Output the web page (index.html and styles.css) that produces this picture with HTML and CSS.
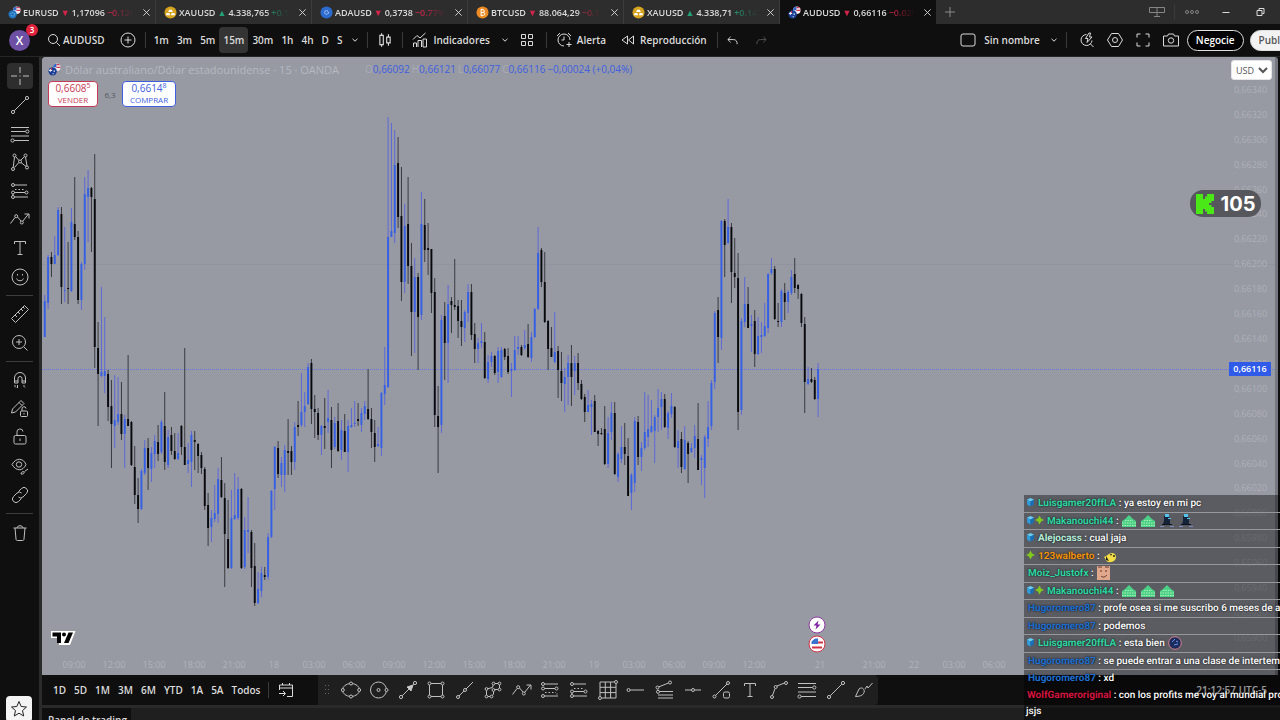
FILE: index.html
```html
<!DOCTYPE html>
<html lang="es">
<head>
    <meta charset="UTF-8">
    <meta name="viewport" content="width=device-width, initial-scale=1">
    <title>AUDUSD 0,66116</title>
    <link rel="stylesheet" href="styles.css">
</head>
<body>
    <!-- Shared icons -->
    <svg class="sprite" aria-hidden="true">
        <symbol id="i-close" viewBox="0 0 10 10"><path d="M1.5 1.5l7 7M8.5 1.5l-7 7"/></symbol>
        <symbol id="i-chevron" viewBox="0 0 8 8"><path d="M1.5 2.8L4 5.2l2.5-2.4"/></symbol>
        <symbol id="i-aud" viewBox="0 0 14 14">
            <g stroke="none"><circle cx="9.5" cy="4.5" r="4" fill="#f3eef2"/><path fill="#d23a50" d="M9 1h3l1 1.500H9zM9 4h4.500v1.500H9z"/><path fill="#2f62c9" d="M6 2l3-1.500v4H5.500z"/><circle cx="5" cy="9" r="4.5" fill="#1b3f94"/><path fill="#e9edf7" d="M2 6.500h1.200v3H2zM1 7.500h3.500v1H1zM6 8h1.500v1.500H6zM5 11h1.200v1H5z"/><path fill="#d23a50" d="M3.200 5.500h1v2h-1z"/></g>
        </symbol>
        <symbol id="i-eur" viewBox="0 0 14 14">
            <g stroke="none"><circle cx="9.5" cy="4.5" r="4" fill="#f3eef2"/><path fill="#d23a50" d="M9 1h3l1 1.500H9zM9 4h4.500v1.500H9z"/><path fill="#2f62c9" d="M6 2l3-1.500v4H5.500z"/></g><circle cx="5" cy="9" r="4.5" fill="#2173bd" stroke="none"/><circle cx="5" cy="9" r="2" stroke="#8fc5e8" stroke-dasharray="1 1"/>
        </symbol>
        <symbol id="i-gold" viewBox="0 0 14 14"><circle cx="7" cy="7" r="6.5" fill="#d6a31e" stroke="none"/><path d="M5.500 4h3l1 2.500h-5zM2.800 7.500h3L6.500 10h-4.500zM8.200 7.500h3L12 10H7.500z" fill="#fff" stroke="none"/></symbol>
        <symbol id="i-ada" viewBox="0 0 14 14"><circle cx="7" cy="7" r="6.5" fill="#2c6bcf" stroke="none"/><circle cx="7" cy="7" r="2" stroke="#dce8ff" stroke-dasharray="1.5 .6"/></symbol>
        <symbol id="i-btc" viewBox="0 0 14 14"><circle cx="7" cy="7" r="6.5" fill="#ee8a22" stroke="none"/><path d="M5.500 4v6M5 4h2.500a1.400 1.400 0 0 1 0 3H5.500h2.500a1.500 1.500 0 0 1 0 3H5M6.500 3v1M6.500 10v1" stroke="#fff"/></symbol>
        <symbol id="i-cross" viewBox="0 0 20 20"><path d="M10 1v6M10 13v6M1 10h6M13 10h6M9.500 10h1"/></symbol>
        <symbol id="i-line" viewBox="0 0 20 20"><path d="M4.200 15.800L15.800 4.200"/><circle cx="3" cy="17" r="1.6"/><circle cx="17" cy="3" r="1.6"/></symbol>
        <symbol id="i-fib" viewBox="0 0 20 20"><path d="M1 3.500h18M1 7.500h14.500M1 12h18M4 16.500h15"/><circle cx="17.3" cy="7.5" r="1.6"/><circle cx="2.5" cy="16.5" r="1.6"/></symbol>
        <symbol id="i-pattern" viewBox="0 0 20 20"><path d="M3.200 15.500L4.500 5M5.500 4.500l3.500 4M10.500 8.500L14.500 4.500M15.500 5L17 14M4.500 15.500L8.800 10.500M11 10.500l5 4"/><circle cx="4.5" cy="3.5" r="1.5"/><circle cx="15.5" cy="3.5" r="1.5"/><circle cx="10" cy="9.5" r="1.5"/><circle cx="3" cy="17" r="1.5"/><circle cx="17" cy="15.5" r="1.5"/></symbol>
        <symbol id="i-forecast" viewBox="0 0 20 20"><path d="M4.500 4H17M4.500 11.500h10.500M4.500 16H18M3 13v1.500"/><path d="M5 8.500h9" stroke-dasharray="1.5 2"/><circle cx="3" cy="4" r="1.5"/><circle cx="3" cy="11.5" r="1.5"/><circle cx="16.5" cy="11.5" r="1.5"/><circle cx="3" cy="16" r="1.5"/></symbol>
        <symbol id="i-range" viewBox="0 0 20 20"><path d="M4.500 4H18M4.500 8.500h10.500M4.500 16H18M17 13.500v1"/><path d="M5 12.500h11" stroke-dasharray="1.5 2"/><circle cx="3" cy="4" r="1.5"/><circle cx="3" cy="8.5" r="1.5"/><circle cx="16.5" cy="8.5" r="1.5"/><circle cx="3" cy="16" r="1.5"/></symbol>
        <symbol id="i-path" viewBox="0 0 20 20"><path d="M.5 14.500L5 8.500M7.500 8l3.500 4M12.500 12.500l6-7.500M14.500 5h4.500v4.500"/><circle cx="6.2" cy="7.2" r="1.5"/><circle cx="11.8" cy="13.5" r="1.5"/></symbol>
        <symbol id="i-text" viewBox="0 0 20 20"><path d="M4.500 6V3.500h11V6M10 3.500v13M7.500 16.500h5"/></symbol>
        <symbol id="i-smile" viewBox="0 0 20 20"><circle cx="10" cy="10" r="8"/><path d="M6.500 11.500c1 3 6 3 7 0M7.500 7v1.500M12.500 7v1.500"/></symbol>
        <symbol id="i-ruler" viewBox="0 0 20 20"><path d="M1.500 14.500l13-13 4 4-13 13zM5 11l2 2M8 8l2 2M11 5l2 2M13 3l1.500 1.500"/></symbol>
        <symbol id="i-zoom" viewBox="0 0 20 20"><circle cx="9" cy="9" r="6.5"/><path d="M14 14l3.500 3.500M6 9h6M9 6v6"/></symbol>
        <symbol id="i-magnet" viewBox="0 0 20 20"><path d="M4.500 13V8a5.500 5.500 0 0 1 11 0v5h-3.500V8.500a2 2 0 0 0-4 0V13zM4.500 11H8M12 11h3.500M5 15v1.500l1 1M14 15v1.500l1 1M7.500 15v3"/></symbol>
        <symbol id="i-pencil-lock" viewBox="0 0 20 20"><path d="M1.500 14l1-4L11 1.500l3 3L5.500 13zM9 3.500l3 3"/><rect x="10.5" y="12" width="7" height="5.5" rx="1"/><path d="M12 12v-2a2 2 0 0 1 4-.5M14 14v1.500"/></symbol>
        <symbol id="i-lock" viewBox="0 0 20 20"><rect x="4" y="8.5" width="12" height="8.5" rx="1.5"/><path d="M7 8.500V5.500a3 3 0 0 1 6-1M10 11.500v2.500"/></symbol>
        <symbol id="i-eye" viewBox="0 0 20 20"><path d="M2 8.500c4-7 11-7 14 0-3 7-10 7-14 0z"/><circle cx="9" cy="8.5" r="2.7"/><path d="M11 18c0-2 2-3 3-2s-1 2.500-3 2zM14.500 15.500L18 13"/></symbol>
        <symbol id="i-link" viewBox="0 0 20 20"><path d="M8.500 6.500l3-3a3.300 3.300 0 0 1 5 5l-3.500 3.500a3.200 3.200 0 0 1-4.500 0M11.500 13.500l-3 3a3.300 3.300 0 0 1-5-5L7 8a3.200 3.200 0 0 1 4.500 0"/></symbol>
        <symbol id="i-trash" viewBox="0 0 20 20"><path d="M3.500 5h13M7 5c0-3 6-3 6 0M5 5l1 11c0 1 .5 1.500 1.500 1.500h5c1 0 1.500-.5 1.500-1.500l1-11"/></symbol>
        <symbol id="i-star" viewBox="0 0 20 20"><path d="M10 2.500l2.200 5 5.300.5-4 3.600 1.200 5.400L10 14.200 5.300 17l1.200-5.400-4-3.600 5.300-.5z"/></symbol>
        <symbol id="i-ellipse" viewBox="0 0 20 20"><ellipse cx="10" cy="10" rx="8.5" ry="6.5"/><g fill="#1f1f1f"><circle cx="10" cy="3.5" r="1.5"/><circle cx="10" cy="16.5" r="1.5"/><circle cx="1.8" cy="10" r="1.5"/><circle cx="18.2" cy="10" r="1.5"/></g></symbol>
        <symbol id="i-circle" viewBox="0 0 20 20"><circle cx="9.5" cy="10" r="8"/><circle cx="9.5" cy="10" r="1.5"/><circle cx="17.5" cy="10" r="1.5" fill="#1f1f1f"/></symbol>
        <symbol id="i-arrow" viewBox="0 0 20 20"><path d="M4.200 15.800L15.800 4.200"/><path d="M15 5l-2 6-4-4z" fill="#ccc"/><circle cx="3" cy="17" r="1.6"/><circle cx="17" cy="3" r="1.6"/></symbol>
        <symbol id="i-rect" viewBox="0 0 20 20"><rect x="3.5" y="3.5" width="13" height="13"/><g fill="#1f1f1f"><circle cx="3.5" cy="3.5" r="1.5"/><circle cx="16.5" cy="3.5" r="1.5"/><circle cx="3.5" cy="16.5" r="1.5"/><circle cx="16.5" cy="16.5" r="1.5"/></g></symbol>
        <symbol id="i-ray" viewBox="0 0 20 20"><path d="M4 16l5-5M11 9l7-7"/><circle cx="3" cy="17" r="1.5"/><circle cx="10" cy="10" r="1.5"/></symbol>
        <symbol id="i-poly" viewBox="0 0 20 20"><path d="M3.500 16.500V9l6-1.500 1-4h6v6h-6V14l-2 2.500z"/><g fill="#1f1f1f"><circle cx="3.5" cy="9" r="1.4"/><circle cx="3.5" cy="16.5" r="1.4"/><circle cx="8.5" cy="16.5" r="1.4"/><circle cx="10.5" cy="10" r="1.4"/><circle cx="10.5" cy="3.5" r="1.4"/><circle cx="16.5" cy="3.5" r="1.4"/><circle cx="16.5" cy="9.5" r="1.4"/></g></symbol>
        <symbol id="i-grid" viewBox="0 0 20 20"><path d="M2 2h16v16H2zM7.300 2v16M12.600 2v16M2 7.300h16M2 12.600h16"/><g fill="#1f1f1f"><circle cx="2" cy="18" r="1.5"/><circle cx="18" cy="2" r="1.5"/></g></symbol>
        <symbol id="i-hray" viewBox="0 0 20 20"><path d="M4 10h14"/><circle cx="2.5" cy="10" r="1.5"/></symbol>
        <symbol id="i-fork" viewBox="0 0 20 20"><path d="M3.500 7l10-4M3 9.500v1M4.500 11.500H18M3 15h15M3 18h15"/><circle cx="2.5" cy="7.5" r="1.5"/><circle cx="15" cy="2.5" r="1.5"/><circle cx="3" cy="11.8" r="1.5"/></symbol>
        <symbol id="i-hline" viewBox="0 0 20 20"><path d="M2 10h6.500M11.500 10H18"/><circle cx="10" cy="10" r="1.5"/></symbol>
        <symbol id="i-info" viewBox="0 0 20 20"><path d="M3.500 15.500L15 4"/><circle cx="2.5" cy="16.5" r="1.5"/><circle cx="16" cy="3" r="1.5"/><rect x="11.5" y="12" width="6" height="6" rx="1.5"/></symbol>
        <symbol id="i-curve" viewBox="0 0 20 20"><path d="M3.500 15.500l2.500-7M8 6l7.500-3"/><circle cx="3" cy="17" r="1.5"/><circle cx="6.7" cy="7" r="1.5"/><circle cx="17" cy="3" r="1.5"/></symbol>
        <symbol id="i-brush" viewBox="0 0 20 20"><path d="M1.500 16.500L5 9c3-3 7 1 4.500 4.500-1 2-4 3-8 3zM11 9l2-3 1 2 4.500-5"/></symbol>
        <symbol id="i-cube" viewBox="0 0 10 10"><g stroke="none"><path fill="#66cdf5" d="M1 2.500L5 .5l4 2-4 2z"/><path fill="#2f9de0" d="M1 2.500l4 2V10L1.500 8z"/><path fill="#1670b8" d="M9 2.500l-4 2V10l3.500-2z"/></g></symbol>
        <symbol id="i-spark" viewBox="0 0 10 10"><path fill="#82c91e" stroke="none" d="M5 0l1.700 3.300L10 5 6.700 6.700 5 10 3.300 6.700 0 5l3.300-1.700z"/></symbol>
        <symbol id="i-house" viewBox="0 0 16 14"><path fill="#4ccf86" stroke="none" d="M1 13V7l3-2 4-4 4 4 3 2v6z"/><path stroke="#a7f3b5" stroke-dasharray="1.5 1" d="M1 9h14M1 11.500h14M4 6.500h8"/></symbol>
        <symbol id="i-robot" viewBox="0 0 16 14"><g stroke="none"><path fill="#15233a" d="M5 2h5l1 4v4H4l1-3z"/><path fill="#55c5ee" d="M6 0h4v3H6zM9 4h3v1H9z"/><path fill="#10131b" d="M3 10h10v1H3z"/><path fill="#7d8cc0" d="M1 12h4v1H1zM11 12h4v1h-4z"/></g></symbol>
    </svg>

    <div class="app">
        <header class="tabs">
            <div class="tab"><svg class="coin"><use href="#i-eur"/></svg><a href="#" class="quote"><b>EURUSD</b><i class="down">▼</i><span>1,17096</span><span class="down">−0.12%</span></a><button class="close" aria-label="Cerrar EURUSD"><svg><use href="#i-close"/></svg></button></div>
            <div class="tab"><svg class="coin"><use href="#i-gold"/></svg><a href="#" class="quote"><b>XAUUSD</b><i class="up">▲</i><span>4.338,765</span><span class="up">+0.14%</span></a><button class="close" aria-label="Cerrar XAUUSD"><svg><use href="#i-close"/></svg></button></div>
            <div class="tab"><svg class="coin"><use href="#i-ada"/></svg><a href="#" class="quote"><b>ADAUSD</b><i class="down">▼</i><span>0,3738</span><span class="down">−0.77% /</span></a><button class="close" aria-label="Cerrar ADAUSD"><svg><use href="#i-close"/></svg></button></div>
            <div class="tab"><svg class="coin"><use href="#i-btc"/></svg><a href="#" class="quote"><b>BTCUSD</b><i class="down">▼</i><span>88.064,29</span><span class="down">−0.17%</span></a><button class="close" aria-label="Cerrar BTCUSD"><svg><use href="#i-close"/></svg></button></div>
            <div class="tab"><svg class="coin"><use href="#i-gold"/></svg><a href="#" class="quote"><b>XAUUSD</b><i class="up">▲</i><span>4.338,71</span><span class="up">+0.14%</span></a><button class="close" aria-label="Cerrar XAUUSD"><svg><use href="#i-close"/></svg></button></div>
            <div class="tab active"><svg class="coin"><use href="#i-aud"/></svg><a href="#" class="quote"><b>AUDUSD</b><i class="down">▼</i><span>0,66116</span><span class="down">−0.02%</span></a><button class="close" aria-label="Cerrar AUDUSD"><svg><use href="#i-close"/></svg></button></div>
            <button class="new-tab" aria-label="Nueva pestaña"><svg viewBox="0 0 12 12"><path d="M6 1v10M1 6h10"/></svg></button>
            <div class="window-buttons">
                <button class="dim" aria-label="Disposición"><svg viewBox="0 0 18 14"><path d="M1.500 2.500h15v5h-15zM9 2.500v9M6 11.500h6"/></svg></button>
                <span class="sep"></span>
                <button class="dim" aria-label="Más"><svg viewBox="0 0 18 14"><circle cx="4" cy="7" r="1.5"/><circle cx="9" cy="7" r="1.5"/><circle cx="14" cy="7" r="1.5"/></svg></button>
                <button aria-label="Minimizar"><svg viewBox="0 0 18 14"><path d="M5.500 7.500h7"/></svg></button>
                <button aria-label="Restaurar"><svg viewBox="0 0 18 14"><path d="M6 5.500h5v5H6zM8 5V3.500h5v5h-1.500"/></svg></button>
            </div>
        </header>

        <div class="toolbar">
            <button class="avatar" aria-label="Perfil">X<span class="badge">3</span></button>
            <button class="symbol"><svg viewBox="0 0 14 14"><circle cx="6" cy="6" r="4.5"/><path d="M9.500 9.500L13 13"/></svg>AUDUSD</button>
            <button class="add" aria-label="Comparar"><svg viewBox="0 0 16 16"><circle cx="8" cy="8" r="7"/><path d="M8 4.500v7M4.500 8h7"/></svg></button>
            <span class="sep"></span>
            <div class="intervals">
                <button>1m</button><button>3m</button><button>5m</button><button class="on">15m</button><button>30m</button><button>1h</button><button>4h</button><button>D</button><button>S</button>
            </div>
            <button class="chev" aria-label="Más intervalos"><svg><use href="#i-chevron"/></svg></button>
            <span class="sep"></span>
            <button class="candle-type" aria-label="Velas"><svg viewBox="0 0 14 14"><path d="M4 1v2M4 11v2M2.500 3h3v8h-3zM10 2v2.500M10 9.500V12M8.500 4.500h3v5h-3z"/></svg></button>
            <span class="sep"></span>
            <button class="indicators"><svg viewBox="0 0 16 16"><path d="M1.500 15v-4h3v4M6 15V8.500h3.500V15M11 15V7h3.500v8zM1 7.500l4-4 3 2.500 5.500-5"/></svg>Indicadores</button>
            <button class="chev" aria-label="Indicadores favoritos"><svg><use href="#i-chevron"/></svg></button>
            <button class="layouts" aria-label="Plantillas"><svg viewBox="0 0 14 14"><path d="M1.500 1.500h4v4h-4zM8.500 1.500h4v4h-4zM1.500 8.500h4v4h-4zM8.500 8.500h4v4h-4z"/></svg></button>
            <span class="sep"></span>
            <button class="alert"><svg viewBox="0 0 16 16"><path d="M14 8a6 6 0 1 0-6 6M8 4.500V8H5.500M1 4l3-3M15 4l-3-3M13 10v5M10.500 12.500h5"/></svg>Alerta</button>
            <button class="replay"><svg viewBox="0 0 14 14"><path d="M6.500 3v8L1 7zM12.500 3v8L7.500 7z"/></svg>Reproducción</button>
            <span class="sep"></span>
            <button class="undo" aria-label="Deshacer"><svg viewBox="0 0 14 14"><path d="M5 3L2 6l3 3M2 6h6c3 0 4 2 4 5"/></svg></button>
            <button class="redo" aria-label="Rehacer"><svg viewBox="0 0 14 14"><path d="M9 3l3 3-3 3M12 6H6c-3 0-4 2-4 5"/></svg></button>

            <div class="toolbar-right">
                <button aria-label="Diseño"><svg viewBox="0 0 16 16"><rect x="1" y="2" width="14" height="12" rx="2"/></svg></button>
                <button class="layout-name">Sin nombre <svg class="small"><use href="#i-chevron"/></svg></button>
                <span class="sep"></span>
                <button aria-label="Búsqueda rápida"><svg viewBox="0 0 16 16"><path d="M7.500 2.500a5.500 5.500 0 1 0 5.500 6M11.500 12l3 3M10 1L6.500 6.500H9l-1 4L13 5h-2.500l1-4z"/></svg></button>
                <button aria-label="Ajustes"><svg viewBox="0 0 16 16"><path d="M4.500 1.500h7L15.500 8l-4 6.500h-7L.5 8z"/><circle cx="8" cy="8" r="2.5"/></svg></button>
                <button aria-label="Pantalla completa"><svg viewBox="0 0 16 16"><path d="M2 5.500V2h3.500M10.500 2H14v3.500M14 10.500V14h-3.500M5.500 14H2v-3.500"/></svg></button>
                <button aria-label="Captura"><svg viewBox="0 0 16 16"><path d="M.5 4h4l1-2h5l1 2h4v10H.5z"/><circle cx="8" cy="8.5" r="2.7"/></svg></button>
                <button class="trade">Negocie</button>
                <button class="publish">Publicar</button>
            </div>
        </div>

        <div class="workspace">
            <nav class="sidebar">
                <div class="tools eight">
                    <button class="on" aria-label="Cruz"><svg><use href="#i-cross"/></svg></button>
                    <button aria-label="Línea de tendencia"><svg><use href="#i-line"/></svg></button>
                    <button aria-label="Fibonacci"><svg><use href="#i-fib"/></svg></button>
                    <button aria-label="Patrones"><svg><use href="#i-pattern"/></svg></button>
                    <button aria-label="Previsión"><svg><use href="#i-forecast"/></svg></button>
                    <button aria-label="Ruta"><svg><use href="#i-path"/></svg></button>
                    <button aria-label="Texto"><svg><use href="#i-text"/></svg></button>
                    <button aria-label="Iconos"><svg><use href="#i-smile"/></svg></button>
                </div>
                <hr>
                <div class="tools two">
                    <button aria-label="Medir"><svg><use href="#i-ruler"/></svg></button>
                    <button aria-label="Acercar"><svg><use href="#i-zoom"/></svg></button>
                </div>
                <hr>
                <div class="tools five">
                    <button aria-label="Imán"><svg><use href="#i-magnet"/></svg></button>
                    <button aria-label="Modo dibujo"><svg><use href="#i-pencil-lock"/></svg></button>
                    <button aria-label="Bloquear"><svg><use href="#i-lock"/></svg></button>
                    <button aria-label="Ocultar"><svg><use href="#i-eye"/></svg></button>
                    <button aria-label="Enlazar"><svg><use href="#i-link"/></svg></button>
                </div>
                <hr>
                <div class="tools one">
                    <button aria-label="Eliminar"><svg><use href="#i-trash"/></svg></button>
                </div>
                <button class="favorite" aria-label="Favoritos"><svg><use href="#i-star"/></svg></button>
            </nav>

            <main class="main">
                <section class="chart">
                    <div class="pane">
                        <svg class="plot" id="plot" role="img" aria-label="Gráfico de velas AUDUSD"></svg>
                        <div class="legend">
                            <div class="title">
                                <svg class="coin"><use href="#i-aud"/></svg>
                                <span class="name">Dólar australiano/Dólar estadounidense · 15 · OANDA</span>
                                <span class="ohlc"><span><i>O</i>0,66092</span><span><i>H</i>0,66121</span><span><i>L</i>0,66077</span><span><i>C</i>0,66116</span><span>−0,00024 (+0,04%)</span></span>
                            </div>
                            <div class="deal">
                                <button class="sell">0,6608<sup>5</sup><small>VENDER</small></button>
                                <span class="spread">6,3</span>
                                <button class="buy">0,6614<sup>8</sup><small>COMPRAR</small></button>
                            </div>
                        </div>
                        <svg class="brand" viewBox="0 0 26 16" aria-hidden="true"><path d="M1 1h24.500L20 15H9V8H1z" fill="#fff"/><path d="M2.500 2.500h8.500v10.500H7V6.500H2.500z"/><circle cx="14" cy="4.5" r="2"/><path d="M18.500 2.500h4.500L18.500 13H14z"/></svg>
                        <div class="events">
                            <svg viewBox="0 0 18 18"><circle cx="9" cy="9" r="8" fill="#fff" stroke="#8e3aa0"/><path d="M10.500 4.500L5.500 9.500h3l-1 4 5-5h-3z" fill="#7b1fa2" stroke="none"/></svg>
                            <svg viewBox="0 0 18 18"><circle cx="9" cy="9" r="8" fill="#fff" stroke="#cf3347"/><path d="M3.500 6.500L7 3.500h3V9H3.500z" fill="#3b73d1" stroke="none"/><path d="M10 7.500h5M4 12.500h10" stroke="#cf3347" stroke-width="2"/></svg>
                        </div>
                        <div class="price-axis" id="prices"></div>
                        <select class="currency" aria-label="Moneda"><option>USD</option></select>
                        <span class="last-price">0,66116</span>
                    </div>
                    <div class="time-axis">
                        <span>09:00</span><span>12:00</span><span>15:00</span><span>18:00</span><span>21:00</span><span>18</span><span>03:00</span><span>06:00</span><span>09:00</span><span>12:00</span><span>15:00</span><span>18:00</span><span>21:00</span><span>19</span><span>03:00</span><span>06:00</span><span>09:00</span><span>12:00</span><span class="week">21</span><span>21:00</span><span>22</span><span>03:00</span><span>06:00</span>
                    </div>
                </section>

                <div class="bottom-bar">
                    <div class="ranges">
                        <button>1D</button><button>5D</button><button>1M</button><button>3M</button><button>6M</button><button>YTD</button><button>1A</button><button>5A</button><button>Todos</button>
                    </div>
                    <span class="sep"></span>
                    <button class="goto" aria-label="Ir a fecha"><svg viewBox="0 0 16 16"><path d="M1.500 8V3h13v11.500H9M1.500 6h13M4.500 1v2M11.500 1v2M1 11.500h6M5 9l2.500 2.500L5 14"/></svg></button>
                    <div class="favorites">
                        <svg class="grip" viewBox="0 0 6 12"><path d="M1.500 1v11M4.500 1v11" stroke-dasharray="1 3"/></svg>
                        <button aria-label="Elipse"><svg><use href="#i-ellipse"/></svg></button>
                        <button aria-label="Círculo"><svg><use href="#i-circle"/></svg></button>
                        <button aria-label="Flecha"><svg><use href="#i-arrow"/></svg></button>
                        <button aria-label="Rectángulo"><svg><use href="#i-rect"/></svg></button>
                        <button aria-label="Rayo"><svg><use href="#i-ray"/></svg></button>
                        <button aria-label="Polilínea"><svg><use href="#i-poly"/></svg></button>
                        <button aria-label="Ruta"><svg><use href="#i-path"/></svg></button>
                        <button aria-label="Posición larga"><svg><use href="#i-range"/></svg></button>
                        <button aria-label="Posición corta"><svg><use href="#i-forecast"/></svg></button>
                        <button aria-label="Cuadrícula"><svg><use href="#i-grid"/></svg></button>
                        <button aria-label="Rayo horizontal"><svg><use href="#i-hray"/></svg></button>
                        <button aria-label="Extensión"><svg><use href="#i-fork"/></svg></button>
                        <button aria-label="Línea horizontal"><svg><use href="#i-hline"/></svg></button>
                        <button aria-label="Línea informativa"><svg><use href="#i-info"/></svg></button>
                        <button aria-label="Texto"><svg><use href="#i-text"/></svg></button>
                        <button aria-label="Curva"><svg><use href="#i-curve"/></svg></button>
                        <button aria-label="Fibonacci"><svg><use href="#i-fib"/></svg></button>
                        <button aria-label="Tendencia"><svg><use href="#i-line"/></svg></button>
                        <button aria-label="Pincel"><svg><use href="#i-brush"/></svg></button>
                    </div>
                    <button class="clock">21:12:57 UTC-5</button>
                </div>

                <footer class="panel"><button>Panel de trading</button></footer>
            </main>
        </div>

        <!-- Stream overlays -->
        <div class="viewers"><svg viewBox="0 0 18 20"><path d="M0 0h7v5h2V2.500h2V0h7v7h-2.500v2H13v2h2.500v2H18v7h-7v-2.500H9V15H7v5H0z" fill="#4be817"/></svg>105</div>

        <ul class="chat">
            <li><svg><use href="#i-cube"/></svg><b class="mint">Luisgamer20ffLA</b> : ya estoy en mi pc</li>
            <li><svg><use href="#i-cube"/></svg><svg><use href="#i-spark"/></svg><b class="mint">Makanouchi44</b> : <svg class="emote"><use href="#i-house"/></svg><svg class="emote"><use href="#i-house"/></svg><svg class="emote"><use href="#i-robot"/></svg><svg class="emote"><use href="#i-robot"/></svg></li>
            <li><svg><use href="#i-cube"/></svg><b class="pale">Alejocass</b> : cual jaja</li>
            <li><svg><use href="#i-spark"/></svg><b class="orange">123walberto</b> : <svg class="emote" viewBox="0 0 16 14"><path d="M2 8c3-1 5-4 8-4 4 0 5 4 3 7-3 3-8 3-9 0z" fill="#f3df45" stroke="none"/><path d="M4 7l3 5-3-1zM8 5h2l-1 2z" fill="#222" stroke="none"/><circle cx="12" cy="7" r="1" fill="#222" stroke="none"/></svg></li>
            <li><b class="mint">Moiz_Justofx</b> : <svg class="emote" viewBox="0 0 16 14"><path d="M1 0h13v14H1z" fill="#dfa78b" stroke="none"/><path d="M2 1h4M9 1h4M4 5h2M9 5h2M5 10c2 2 4 1 6-1" stroke="#63342b"/></svg></li>
            <li><svg><use href="#i-cube"/></svg><svg><use href="#i-spark"/></svg><b class="mint">Makanouchi44</b> : <svg class="emote"><use href="#i-house"/></svg><svg class="emote"><use href="#i-house"/></svg><svg class="emote"><use href="#i-house"/></svg></li>
            <li><b class="blue">Hugoromero87</b> : profe osea si me suscribo 6 meses de academia</li>
            <li><b class="blue">Hugoromero87</b> : podemos</li>
            <li><svg><use href="#i-cube"/></svg><b class="mint">Luisgamer20ffLA</b> : esta bien <svg class="emote" viewBox="0 0 16 14"><circle cx="8" cy="7" r="6.3" fill="#1c2a5c" stroke="#d9848f"/><path d="M5 6l3-3M7 9l4-1M9 5l2 1" stroke="#6f93e8"/></svg></li>
            <li><b class="blue">Hugoromero87</b> : se puede entrar a una clase de intertemporal</li>
            <li class="plain"><b class="blue">Hugoromero87</b> : xd</li>
            <li class="plain last"><b class="red">WolfGameroriginal</b> : con los profits me voy al mundial profe<br>jsjs</li>
        </ul>
    </div>

    <script src="chart.js"></script>
</body>
</html>
```
FILE: styles.css
```css
* {
    margin: 0;
    padding: 0;
    box-sizing: border-box;
}

body {
    background: #0f0f0f;
    color: #dbdbdb;
    font-family: "Open Sans", "Noto Sans", sans-serif;
    font-size: 10px;
    font-weight: 600;
    overflow: hidden;
}
button {
    background: none;
    border: 0;
    color: inherit;
    font: inherit;
    display: flex;
    align-items: center;
    justify-content: center;
    white-space: nowrap;
}
a {
    color: inherit;
    text-decoration: none;
}
i {
    font-style: normal;
}
svg {
    fill: none;
    stroke: currentColor;
    flex: none;
}
.sprite {
    position: absolute;
    width: 0;
    height: 0;
}
.app {
    position: relative;
    height: 100vh;
    display: flex;
    flex-direction: column;
    overflow: hidden;
}
.sep {
    width: 1px;
    height: 16px;
    background: #3a3a3a;
    flex: none;
}
.up { color: #22a078; }
.down { color: #d3254b; }

/* Symbol tabs */
.tabs {
    height: 24px;
    flex: none;
    display: flex;
    background: #2d2d2d;
    font-size: 9px;
}
.tab {
    flex: 0 1 156px;
    min-width: 0;
    display: flex;
    align-items: center;
    padding: 0 3px 0 8px;
    border-right: 1px solid #3c3c3c;
}
.tab.active {
    background: #0f0f0f;
    border: 0;
}
.coin {
    width: 13px;
    height: 13px;
    margin-right: 2px;
}
.quote {
    flex: 1;
    min-width: 0;
    display: flex;
    gap: 2px;
    overflow: hidden;
    white-space: nowrap;
    -webkit-mask-image: linear-gradient(to right, #000 75%, transparent 98%);
    mask-image: linear-gradient(to right, #000 75%, transparent 98%);
}
.quote i {
    width: 9px;
    font-size: 9px;
    text-align: center;
}
.quote b {
    font-weight: 600;
}
.close {
    width: 12px;
    height: 24px;
    margin-left: 4px;
}
.close svg {
    width: 9px;
    height: 9px;
}
.new-tab {
    width: 28px;
    color: #8a8a8a;
}
.new-tab svg {
    width: 12px;
    height: 12px;
}
.window-buttons {
    margin-left: auto;
    display: flex;
    align-items: center;
    padding-right: 3px;
}
.window-buttons button {
    width: 34px;
    height: 24px;
}
.window-buttons svg {
    width: 18px;
    height: 14px;
}
.dim {
    color: #858585;
}

/* Main toolbar */
.toolbar {
    height: 33px;
    flex: none;
    display: flex;
    align-items: center;
    border-bottom: 1px solid #262626;
    padding-left: 9px;
}
.toolbar svg {
    width: 16px;
    height: 16px;
}
.avatar {
    position: relative;
    width: 21px;
    height: 21px;
    border-radius: 50%;
    background: #6d4fa3;
    color: #fff;
    font-size: 12px;
}
.badge {
    position: absolute;
    top: -6px;
    right: -8px;
    width: 12px;
    height: 12px;
    border-radius: 50%;
    background: #e0223c;
    font-size: 8px;
    line-height: 12px;
}
.symbol {
    margin-left: 17px;
    gap: 2px;
}
.toolbar .symbol svg {
    width: 14px;
    height: 14px;
}
.add {
    margin: 0 9px 0 15px;
}
.intervals {
    display: flex;
    margin-left: 4px;
}
.intervals button {
    height: 26px;
    padding: 0 4px;
    border-radius: 4px;
}
.intervals .on {
    background: #343434;
}
.chev {
    width: 18px;
}
.toolbar .chev svg, .toolbar .small {
    width: 8px;
    height: 8px;
}
.chev + .sep {
    margin-left: 3px;
}
.candle-type {
    width: 34px;
}
.indicators {
    gap: 5px;
    margin: 0 6px 0 9px;
}
.layouts {
    width: 26px;
    margin-right: 6px;
}
.toolbar .layouts svg {
    width: 14px;
    height: 14px;
}
.alert {
    margin: 0 15px 0 9px;
    gap: 5px;
}
.replay {
    margin-right: 10px;
    gap: 5px;
}
.toolbar .replay svg {
    width: 14px;
    height: 14px;
}
.undo, .redo {
    width: 29px;
}
.redo {
    color: #555;
}
.toolbar .undo svg, .toolbar .redo svg {
    width: 13px;
    height: 13px;
}
.toolbar-right {
    margin-left: auto;
    margin-right: -27px;
    display: flex;
    align-items: center;
    gap: 12px;
}
.layout-name {
    gap: 10px;
    margin: 0 -4px;
}
.toolbar .trade, .toolbar .publish {
    height: 21px;
    border-radius: 11px;
    border: 1px solid #e0e0e0;
    color: #fff;
    padding: 0 8px;
    margin: 0 -6px 0 -4px;
    background: #000;
}
.toolbar .publish {
    background: #f2f2f2;
    color: #555;
    margin: 0;
}

/* Drawing tools */
.workspace {
    flex: 1;
    min-height: 0;
    display: flex;
}
.sidebar {
    width: 42px;
    flex: none;
    display: flex;
    flex-direction: column;
    padding: 5px 0 0;
    border-right: 3px solid #2a2b2b;
}
.sidebar svg, .favorites svg {
    width: 20px;
    height: 20px;
}
.tools {
    display: grid;
    grid-auto-rows: 1fr;
    justify-items: center;
    align-items: center;
    color: #c0c0c0;
}
.eight { height: 229px; }
.two { height: 57px; }
.five { height: 143px; }
.one { height: 29px; }
.tools button {
    width: 26px;
    height: 26px;
    border-radius: 4px;
}
.tools .on {
    background: #2e2e2e;
}
.sidebar hr {
    width: 27px;
    border: 0;
    border-top: 1px solid #3c3c3c;
    margin: 4px auto 4px 6px;
}
.favorite {
    width: 26px;
    height: 26px;
    margin: auto 0 -2px 6px;
    border-radius: 4px;
    background: #f4f4f4;
    color: #222;
}

/* Chart */
.main {
    flex: 1;
    min-width: 0;
    display: flex;
    flex-direction: column;
}
.chart {
    flex: 1;
    min-height: 0;
    display: flex;
    flex-direction: column;
    margin-right: 2px;
    background: #979aa3;
    border-right: 3px solid #777980;
    border-radius: 3px 3px 0 0;
    font-weight: 400;
}
.pane {
    position: relative;
    flex: 1;
    min-height: 0;
    display: flex;
    justify-content: space-between;
}
.plot {
    position: absolute;
    width: 100%;
    height: 100%;
    stroke: none;
}
.legend {
    position: relative;
    padding: 4px 0 0 6px;
}
.title {
    display: flex;
    align-items: center;
    height: 16px;
    font-size: 11px;
    color: #b5b8c1;
    white-space: nowrap;
}
.title .coin {
    margin-right: 4px;
}
.ohlc {
    display: flex;
    gap: 2px;
    margin-left: 26px;
    font-size: 10px;
    color: #3f5ee0;
}
.ohlc i {
    color: #a9acb6;
}
.deal {
    display: flex;
    align-items: center;
    margin-top: 4px;
}
.sell, .buy {
    display: block;
    width: 50px;
    height: 26px;
    border: 1px solid #c73a55;
    border-radius: 4px;
    background: #fff;
    color: #c73a55;
    font-size: 10px;
    line-height: 11px;
}
.buy {
    width: 54px;
    border-color: #3f5ee0;
    color: #3f5ee0;
}
.deal sup {
    font-size: 7px;
    line-height: 1px;
}
.deal small {
    display: block;
    font-size: 8px;
    line-height: 11px;
}
.spread {
    width: 24px;
    text-align: center;
    font-size: 8px;
    color: #55575e;
}
.brand {
    position: absolute;
    left: 8px;
    bottom: 9px;
    width: 26px;
    height: 16px;
    fill: #000;
    stroke: none;
}
.events {
    position: absolute;
    left: 766px;
    bottom: 2px;
    width: 18px;
    display: grid;
    gap: 1px;
}
.price-axis {
    position: relative;
    width: 41px;
    margin-right: 4px;
    padding: 20px 0 5px;
    display: flex;
    flex-direction: column;
    font-size: 9px;
    color: #adb0b8;
}
.price-axis span {
    flex: 1;
    display: flex;
    align-items: center;
    justify-content: center;
}
.currency {
    position: absolute;
    top: 3px;
    right: 3px;
    width: 41px;
    height: 20px;
    border: 1px solid #e4e4e8;
    border-radius: 3px;
    background: #fff;
    color: #555;
    font: 9px "Open Sans", sans-serif;
}
.last-price {
    position: absolute;
    right: 4px;
    top: 305px;
    width: 42px;
    height: 14px;
    background: #2f5be8;
    color: #fff;
    font-size: 9px;
    font-weight: 600;
    line-height: 14px;
    text-align: center;
}
.time-axis {
    height: 20px;
    flex: none;
    display: flex;
    padding-left: 12px;
    overflow: hidden;
    font-size: 9px;
    line-height: 19px;
    color: #b0b3bb;
}
.time-axis span {
    flex: 0 0 40px;
    text-align: center;
}
.time-axis .week {
    margin: 0 14px 0 26px;
}

/* Ranges and favourite drawings */
.bottom-bar {
    height: 30px;
    flex: none;
    display: flex;
    align-items: center;
    padding-left: 7px;
}
.ranges {
    display: flex;
}
.ranges button {
    padding: 0 4px;
}
.bottom-bar .sep {
    margin: 0 9px 0 4px;
}
.goto svg {
    width: 16px;
    height: 16px;
}
.favorites {
    width: 560px;
    height: 30px;
    margin-left: 24px;
    display: flex;
    align-items: center;
    background: #1f1f1f;
    border-radius: 0 4px 4px 0;
    color: #c0c0c0;
}
.favorites .grip {
    width: 6px;
    height: 12px;
    margin: 0 6px;
    color: #666;
}
.favorites button {
    flex: 1;
}
.clock {
    margin-left: auto;
    padding-right: 13px;
    color: #fff;
}
.panel {
    height: 15px;
    flex: none;
    overflow: hidden;
    background: #1f1f1f;
    border-top: 3px solid #2a2a2a;
}
.panel button {
    padding: 5px 0 0 6px;
    width: 89px;
    justify-content: flex-start;
    background: #0f0f0f;
}

/* Viewer counter and chat */
.viewers {
    position: absolute;
    right: 19px;
    top: 190px;
    width: 71px;
    height: 27px;
    display: flex;
    align-items: center;
    justify-content: center;
    gap: 7px;
    border-radius: 13px;
    background: #55575c;
    color: #fff;
    font: bold 20px Inter, sans-serif;
}
.viewers svg {
    width: 18px;
    height: 20px;
    stroke: none;
}
.chat {
    position: absolute;
    right: 0;
    bottom: 0;
    width: 256px;
    height: 225px;
    display: flex;
    flex-direction: column;
    overflow: hidden;
    list-style: none;
    background: rgba(0, 0, 0, 0.4);
    color: #fff;
    font: 500 10px/17px Roboto, sans-serif;
    text-rendering: geometricPrecision;
    text-shadow: 0 0 2px #000;
}
.chat li {
    flex: 1 1 0;
    min-height: 0;
    padding-left: 3px;
    border-bottom: 1px solid #96979b;
    white-space: nowrap;
}
.chat .plain {
    border-color: transparent;
}
.chat .last {
    flex: none;
    height: 32px;
    padding-left: 2px;
    line-height: 16px;
}
.chat svg {
    width: 9px;
    height: 10px;
    margin: 0 1px 0 -1px;
    vertical-align: -1px;
}
.chat b {
    font-weight: 700;
    margin-left: 1px;
}
.chat svg + b {
    margin-left: 2px;
}
.chat .emote {
    width: 16px;
    height: 14px;
    margin: 0 3px 0 0;
    vertical-align: -4px;
}
.mint { color: #2fd6a3; }
.pale { color: #b7f0dc; }
.orange { color: #f0930f; }
.blue { color: #1f6fd0; }
.red { color: #d4143f; }
```
FILE: chart.js
```js
// Each candle: high, body top, body bottom, low, 1 = up / 0 = down
const candles = [
    [295,301,337,337,1],[255,257,303,309,1],[252,257,264,277,0],[236,255,264,264,1],[207,210,255,256,1],[207,214,287,304,0],[227,290,291,302,1],[242,288,289,304,0],
    [208,222,291,292,1],[177,224,237,240,0],[231,237,300,304,0],[262,264,300,310,1],[177,194,264,270,1],[170,188,197,242,1],[187,188,197,252,0],[154,199,347,368,0],
    [322,348,374,426,0],[287,372,376,377,1],[317,371,376,393,1],[370,374,407,421,0],[380,406,424,468,0],[375,420,426,448,1],[377,414,422,425,1],[382,414,434,440,0],
    [415,419,434,468,1],[355,419,426,426,0],[421,422,465,466,0],[446,467,495,504,0],[478,495,509,523,0],[469,471,509,510,1],[440,448,473,475,1],[438,448,468,490,0],
    [447,453,469,482,1],[435,441,454,468,1],[425,442,454,461,0],[420,422,452,454,1],[392,426,462,470,0],[430,437,465,468,1],[427,435,451,455,0],[433,451,459,460,0],
    [433,453,459,460,1],[425,426,447,455,0],[348,447,465,465,0],[443,460,464,473,1],[431,435,462,487,1],[431,440,442,470,0],[443,444,456,473,0],[452,455,468,474,0],
    [467,469,506,510,0],[493,505,528,546,0],[510,518,527,542,1],[485,513,519,522,1],[468,479,514,523,1],[457,480,497,498,0],[483,498,534,587,0],[500,539,568,569,0],
    [490,518,568,569,1],[473,515,519,520,1],[477,489,518,520,1],[488,489,568,569,0],[517,530,567,569,1],[497,530,532,553,1],[530,532,568,587,0],[543,566,603,606,0],
    [572,589,603,604,1],[567,573,591,597,1],[567,575,577,580,0],[533,537,577,580,1],[490,491,537,538,1],[446,447,489,510,1],[441,448,474,478,0],[457,463,475,487,1],
    [445,450,475,492,1],[419,451,453,475,0],[446,451,462,475,0],[422,427,462,470,1],[401,425,427,436,0],[373,412,425,427,1],[392,406,412,427,1],[363,367,404,405,1],
    [359,363,409,424,0],[395,409,412,438,0],[408,413,435,440,0],[425,426,435,455,1],[398,426,428,449,0],[390,418,422,433,1],[407,420,450,468,0],[417,423,447,449,1],
    [403,421,451,452,0],[420,430,450,460,1],[414,431,452,452,0],[420,426,452,472,1],[408,425,427,428,1],[401,423,424,427,1],[403,419,421,426,0],[408,413,425,432,1],
    [401,406,414,420,1],[369,409,419,420,0],[408,419,432,448,0],[420,433,447,462,0],[427,444,446,447,1],[392,393,448,456,1],[347,385,394,405,1],[117,237,387,388,1],
    [123,231,237,237,1],[130,165,233,243,1],[137,163,217,228,0],[167,216,282,301,0],[204,226,282,293,1],[177,224,266,284,0],[243,266,312,356,0],[258,277,312,353,1],
    [273,277,317,370,0],[192,224,315,320,1],[199,225,250,262,0],[223,248,250,275,0],[249,249,293,313,0],[278,292,415,427,0],[386,416,427,473,0],[315,320,425,433,1],
    [302,316,343,380,0],[285,304,343,383,1],[297,301,305,333,0],[259,305,307,310,0],[300,306,321,338,0],[300,321,327,346,0],[310,312,328,342,1],[284,292,313,322,1],
    [284,292,335,340,0],[323,334,349,363,0],[338,343,349,363,1],[323,341,343,348,1],[332,342,378,379,0],[355,362,379,383,1],[352,356,362,367,1],[355,356,373,375,0],
    [347,351,372,383,1],[347,350,377,378,1],[348,349,357,360,0],[348,356,372,374,0],[363,369,371,397,1],[336,350,370,371,1],[336,347,349,355,1],[345,347,355,356,0],
    [330,345,348,350,1],[324,344,357,358,0],[332,337,358,362,1],[308,309,337,338,1],[227,253,309,310,1],[248,250,282,287,0],[252,282,322,323,0],[320,321,349,370,0],
    [327,348,357,357,0],[312,352,362,363,1],[346,351,370,398,0],[352,371,383,401,0],[368,377,384,412,1],[355,363,377,405,1],[345,363,377,406,0],[356,363,371,395,1],
    [353,363,383,390,0],[380,384,399,400,0],[394,397,412,422,0],[390,405,412,412,1],[400,404,407,435,1],[395,401,432,432,0],[430,431,434,446,0],[428,433,434,435,0],
    [406,429,464,465,0],[417,433,464,468,1],[402,413,432,440,1],[402,413,474,475,0],[452,454,477,482,1],[426,447,459,463,1],[423,447,454,465,0],[438,456,496,496,0],
    [473,475,493,510,1],[417,421,483,492,1],[416,422,457,465,0],[442,448,457,471,1],[392,432,448,450,1],[395,429,437,447,1],[400,426,432,433,1],[415,417,431,463,1],
    [389,408,417,432,1],[392,399,407,430,1],[394,399,427,428,0],[411,413,428,439,1],[393,406,414,418,1],[406,407,447,448,0],[430,441,448,468,1],[432,439,467,473,0],
    [426,440,469,470,1],[441,443,454,483,0],[443,448,452,453,1],[425,436,448,458,1],[403,439,470,470,0],[455,458,460,485,1],[435,437,468,498,1],[401,427,439,447,1],
    [380,383,426,430,1],[311,313,382,389,1],[297,310,337,363,0],[220,221,338,350,1],[219,221,245,277,0],[199,227,243,244,1],[223,227,272,303,0],[238,273,277,288,0],
    [253,278,412,430,0],[318,321,410,415,1],[277,304,322,327,1],[287,304,328,328,0],[315,324,326,352,1],[310,321,354,367,0],[317,336,354,355,1],[322,335,337,353,1],
    [303,326,336,337,1],[273,274,328,333,1],[258,269,273,275,1],[266,269,319,320,0],[303,321,322,327,0],[289,291,322,327,1],[283,293,302,320,0],[290,292,302,313,1],
    [270,277,293,295,1],[258,274,288,293,0],[284,285,289,299,0],[293,294,323,327,0],[317,324,382,413,0],[367,379,384,385,1],[368,379,382,383,0],[377,380,399,400,0],
    [363,369,399,417,1]
];

const STEP = 10 / 3;
const TOP = 57;
const plot = document.getElementById('plot');

function draw(name, attrs) {
    const el = document.createElementNS('http://www.w3.org/2000/svg', name);
    Object.entries(attrs).forEach(([key, value]) => el.setAttribute(key, value));
    plot.appendChild(el);
}

// faint grid line and the dotted last price line
draw('line', { x1: 0, x2: '100%', y1: 207.5, y2: 207.5, stroke: '#9194a0' });
draw('line', { x1: 0, x2: '100%', y1: 312.5, y2: 312.5, stroke: '#6577dc', 'stroke-dasharray': '1 1' });

candles.forEach(([high, top, bottom, low, up], i) => {
    const x = 2.7 + i * STEP;
    draw('rect', { x: x - 0.4, y: high - TOP, width: 0.9, height: low - high, fill: up ? '#5863dc' : '#303136' });
    draw('rect', { x: x - 0.9, y: top - TOP, width: 1.9, height: Math.max(bottom - top, 1), fill: up ? '#3560e6' : '#08090d' });
});

const prices = document.getElementById('prices');
for (let p = 66340; p >= 65900; p -= 20) {
    const label = document.createElement('span');
    label.textContent = '0,' + p;
    prices.appendChild(label);
}
```
